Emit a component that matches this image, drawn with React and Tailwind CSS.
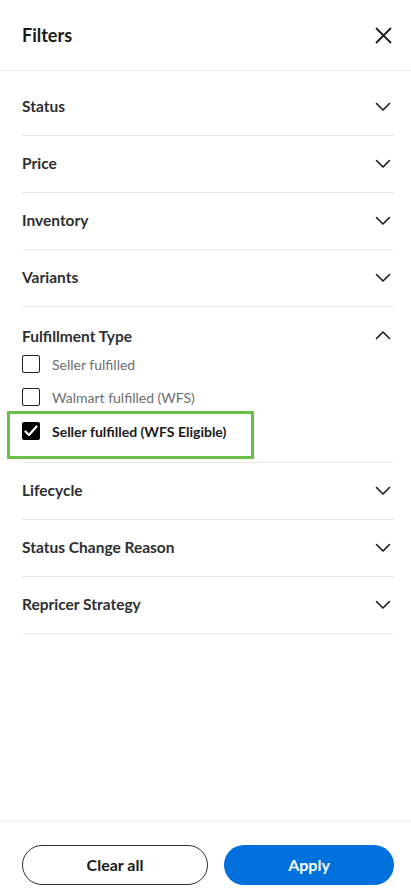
import React from "react";

const Chevron = ({ up }) => (
  <svg width="16" height="10" viewBox="0 0 16 10" fill="none" className="shrink-0">
    {up ? (
      <path d="M1.5 8.5L8 2L14.5 8.5" stroke="#1a1a1a" strokeWidth="1.6" strokeLinecap="round" strokeLinejoin="round" />
    ) : (
      <path d="M1.5 1.5L8 8L14.5 1.5" stroke="#1a1a1a" strokeWidth="1.6" strokeLinecap="round" strokeLinejoin="round" />
    )}
  </svg>
);

const Row = ({ label }) => (
  <div className="flex h-[57px] items-center justify-between border-b border-[#e8e8e8] pr-[3px]">
    <span className="text-[15.5px] font-bold text-[#2e2f32]">{label}</span>
    <Chevron />
  </div>
);

const Box = ({ checked }) =>
  checked ? (
    <div className="flex h-[18px] w-[18px] shrink-0 items-center justify-center rounded-[2px] bg-black">
      <svg width="14" height="12" viewBox="0 0 14 12" fill="none">
        <path d="M1.5 6.5L5 10L12.5 1.5" stroke="white" strokeWidth="2.2" strokeLinecap="round" strokeLinejoin="round" />
      </svg>
    </div>
  ) : (
    <div className="h-[18px] w-[18px] shrink-0 rounded-[2px] border border-[#222]" />
  );

export default function App() {
  return (
    <div
      className="flex h-[891px] w-[411px] flex-col bg-white"
      style={{ fontFamily: "Lato, 'Open Sans', sans-serif" }}
    >
      <div className="flex h-[71px] items-center justify-between border-b border-[#eeeeee] pl-[22px] pr-[19px]">
        <span className="text-[18px] font-bold text-[#1a1a1a]">Filters</span>
        <svg width="17" height="17" viewBox="0 0 17 17" fill="none">
          <path d="M1.5 1.5L15.5 15.5M15.5 1.5L1.5 15.5" stroke="#1a1a1a" strokeWidth="1.8" strokeLinecap="round" />
        </svg>
      </div>

      <div className="mx-[17px] pl-[5px] pt-2">
        <Row label="Status" />
        <Row label="Price" />
        <Row label="Inventory" />
        <Row label="Variants" />

        <div className="border-b border-[#e8e8e8] pb-[22px] pr-[3px]">
          <div className="flex h-[38px] items-end justify-between">
            <span className="text-[15.5px] font-bold leading-[18px] text-[#2e2f32]">Fulfillment Type</span>
            <span className="pb-[5px]">
              <Chevron up />
            </span>
          </div>
          <div className="mt-[10px] flex flex-col gap-[15px]">
            <div className="flex h-[18px] items-center gap-3">
              <Box />
              <span className="text-[14px] text-[#6d6e71]">Seller fulfilled</span>
            </div>
            <div className="flex h-[18px] items-center gap-3">
              <Box />
              <span className="text-[14px] text-[#6d6e71]">Walmart fulfilled (WFS)</span>
            </div>
            <div className="relative mt-[1px] flex h-[18px] items-center gap-3">
              <Box checked />
              <span className="text-[14px] font-bold text-[#1a1a1a]">Seller fulfilled (WFS Eligible)</span>
              <div className="pointer-events-none absolute left-[-15px] top-[-11px] h-[48px] w-[247px] border-[3px] border-[#6abf4b]" />
            </div>
          </div>
        </div>

        <Row label="Lifecycle" />
        <Row label="Status Change Reason" />
        <Row label="Repricer Strategy" />
      </div>

      <div className="flex-1" />

      <div className="border-t border-[#eeeeee] pb-[6px] pl-[22px] pr-[17px] pt-[24px]">
        <div className="flex gap-4">
          <button className="flex h-10 w-[186px] shrink-0 items-center justify-center rounded-full border border-[#2e2f32] bg-white text-[16px] font-bold text-[#1a1a1a]">
            Clear all
          </button>
          <button className="flex h-10 w-[170px] shrink-0 items-center justify-center rounded-full bg-[#0071dc] text-[16px] font-bold text-white">
            Apply
          </button>
        </div>
      </div>
    </div>
  );
}
